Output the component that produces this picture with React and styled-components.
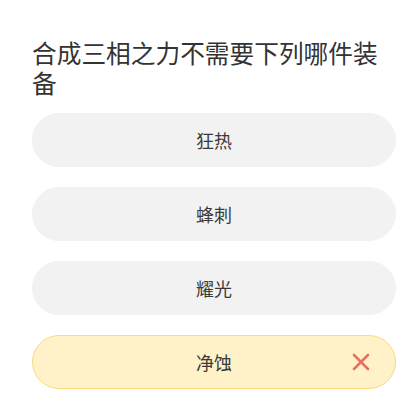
import React from 'react';
import styled, { createGlobalStyle } from 'styled-components';

const GlobalStyle = createGlobalStyle`
  html, body {
    margin: 0;
    padding: 0;
    background: #ffffff;
    font-family: "Noto Sans CJK SC", "Noto Sans", sans-serif;
  }
`;

const options = [
  { label: '狂热' },
  { label: '蜂刺' },
  { label: '耀光' },
  { label: '净蚀', wrong: true },
];

export default function App() {
  return (
    <>
      <GlobalStyle />
      <Page>
        <Question>合成三相之力不需要下列哪件装备</Question>
        <OptionList>
          {options.map((o) => (
            <Option key={o.label} $wrong={o.wrong}>
              {o.label}
              {o.wrong && (
                <Mark viewBox='0 0 18 18'>
                  <path d='M2 2 L16 16 M16 2 L2 16' stroke='#e8705f' strokeWidth='2.6' strokeLinecap='round' />
                </Mark>
              )}
            </Option>
          ))}
        </OptionList>
      </Page>
    </>
  );
}

const Page = styled.div`
  padding: 37px 24px 0 32px;
  width: 420px;
  box-sizing: border-box;
`;
const Question = styled.h2`
  margin: 0 0 16px;
  max-width: 360px;
  font-size: 24.7px;
  line-height: 30px;
  font-weight: 400;
  color: #333333;
`;
const OptionList = styled.div`
  display: flex;
  flex-direction: column;
  gap: 20px;
  width: 364px;
`;
const Option = styled.div`
  position: relative;
  height: 54px;
  border-radius: 27px;
  box-sizing: border-box;
  display: flex;
  align-items: center;
  justify-content: center;
  font-size: 18px;
  color: #3a3a3a;
  background: ${(p) => (p.$wrong ? '#fff1c8' : '#f2f2f2')};
  border: 1.5px solid ${(p) => (p.$wrong ? '#f7dc80' : '#f2f2f2')};
`;
const Mark = styled.svg`
  position: absolute;
  right: 25px;
  top: 50%;
  width: 18px;
  height: 18px;
  transform: translateY(-50%);
`;
